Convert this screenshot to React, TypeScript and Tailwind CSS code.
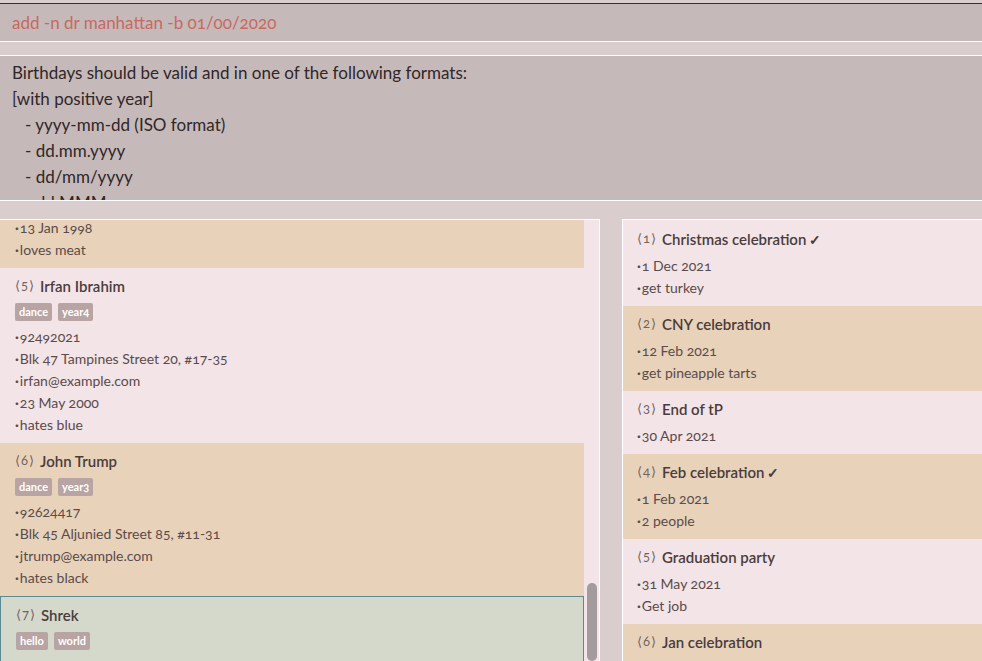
import React from "react";

type Person = {
  idx: number;
  name: string;
  tags: string[];
  lines: string[];
  tone: "pink" | "tan" | "sel";
};

type Event = {
  idx: number;
  title: string;
  done?: boolean;
  lines: string[];
  tone: "pink" | "tan";
};

const people: Person[] = [
  { idx: 5, name: "Irfan Ibrahim", tags: ["dance", "year4"], tone: "pink", lines: ["92492021", "Blk 47 Tampines Street 20, #17-35", "irfan@example.com", "23 May 2000", "hates blue"] },
  { idx: 6, name: "John Trump", tags: ["dance", "year3"], tone: "tan", lines: ["92624417", "Blk 45 Aljunied Street 85, #11-31", "jtrump@example.com", "hates black"] },
  { idx: 7, name: "Shrek", tags: ["hello", "world"], tone: "sel", lines: ["87438807", "Swamp"] },
];

const events: Event[] = [
  { idx: 1, title: "Christmas celebration", done: true, tone: "pink", lines: ["1 Dec 2021", "get turkey"] },
  { idx: 2, title: "CNY celebration", tone: "tan", lines: ["12 Feb 2021", "get pineapple tarts"] },
  { idx: 3, title: "End of tP", tone: "pink", lines: ["30 Apr 2021"] },
  { idx: 4, title: "Feb celebration", done: true, tone: "tan", lines: ["1 Feb 2021", "2 people"] },
  { idx: 5, title: "Graduation party", tone: "pink", lines: ["31 May 2021", "Get job"] },
  { idx: 6, title: "Jan celebration", tone: "tan", lines: ["1 Jan 2021"] },
];

const toneCls = {
  pink: "bg-[#f2e4e7]",
  tan: "bg-[#e8d2b9]",
  sel: "bg-[#d5d9cb] border border-[#5d8a92]",
};

function Header({ idx, title, done }: { idx: number; title: string; done?: boolean }) {
  return (
    <div className="flex items-center h-5 text-[15px] font-semibold text-[#4a3c3d]">
      <span className="text-[13px] font-normal text-[#6f6263] mr-[5px] tracking-[1px]">⟨{idx}⟩</span>
      <span>{title}</span>
      {done && <span className="ml-[3px] text-[14px]">✓</span>}
    </div>
  );
}

function Line({ text }: { text: string }) {
  return (
    <div className="h-[22px] leading-[22px] text-[14px] text-[#5a4b4c]">
      <span className="font-bold mr-[1px]">·</span>
      {text}
    </div>
  );
}

function PersonCard({ p }: { p: Person }) {
  return (
    <div className={`${toneCls[p.tone]} pl-[15px] pt-2 pb-[7px]`}>
      <Header idx={p.idx} title={p.name} />
      <div className="flex gap-[6px] mt-[7px] mb-[5px] h-[18px]">
        {p.tags.map((t) => (
          <span key={t} className="bg-[#b8a4a3] text-white text-[11px] font-bold rounded-[2px] px-[4px] leading-[18px]">
            {t}
          </span>
        ))}
      </div>
      {p.lines.map((l) => (
        <Line key={l} text={l} />
      ))}
    </div>
  );
}

function EventCard({ e }: { e: Event }) {
  return (
    <div className={`${toneCls[e.tone]} pl-[14px] pt-2 pb-[7px]`}>
      <Header idx={e.idx} title={e.title} done={e.done} />
      <div className="mt-[6px]">
        {e.lines.map((l) => (
          <Line key={l} text={l} />
        ))}
      </div>
    </div>
  );
}

export default function App() {
  return (
    <div className="w-[982px] h-[661px] overflow-hidden flex flex-col bg-[#d9cdcd] font-['Lato',sans-serif] [font-variant-numeric:oldstyle-nums]">
      <div className="h-[3px] shrink-0" />
      {/* command box */}
      <div className="h-[39px] shrink-0 border-t border-[#3b2f30] bg-[#c6b9b9] flex items-center px-3 text-[17px] text-[#c76a60] border-b border-b-white">
        add -n dr manhattan -b 01/00/2020
      </div>
      <div className="h-[13px] shrink-0" />
      {/* result box */}
      <div className="h-[146px] shrink-0 border-y border-white bg-[#c6b9b9] overflow-hidden px-3 pt-[4px] text-[17px] leading-[26px] text-[#2f2728] whitespace-pre">
        <div>Birthdays should be valid and in one of the following formats:</div>
        <div>[with positive year]</div>
        <div>{"   - yyyy-mm-dd (ISO format)"}</div>
        <div>{"   - dd.mm.yyyy"}</div>
        <div>{"   - dd/mm/yyyy"}</div>
        <div>{"   - dd MMM yyyy"}</div>
      </div>
      <div className="h-[18px] shrink-0" />
      {/* lists */}
      <div className="flex flex-1 min-h-0 gap-[22px]">
        <div className="w-[600px] shrink-0 flex border-t border-r border-white bg-[#f2e4e7] overflow-hidden">
          <div className="w-[584px] shrink-0">
            <div className="bg-[#e8d2b9] pl-[15px] pb-[7px] -mt-[3px]">
              <Line text="13 Jan 1998" />
              <Line text="loves meat" />
            </div>
            {people.map((p) => (
              <PersonCard key={p.idx} p={p} />
            ))}
          </div>
          <div className="flex-1 flex flex-col items-center pt-[363px]">
            <div className="w-[10px] h-[120px] rounded-full bg-[#a49b9c]" />
          </div>
        </div>
        <div className="flex-1 border-t border-l border-white bg-[#f2e4e7] overflow-hidden pt-[1px]">
          {events.map((e) => (
            <EventCard key={e.idx} e={e} />
          ))}
        </div>
      </div>
    </div>
  );
}
